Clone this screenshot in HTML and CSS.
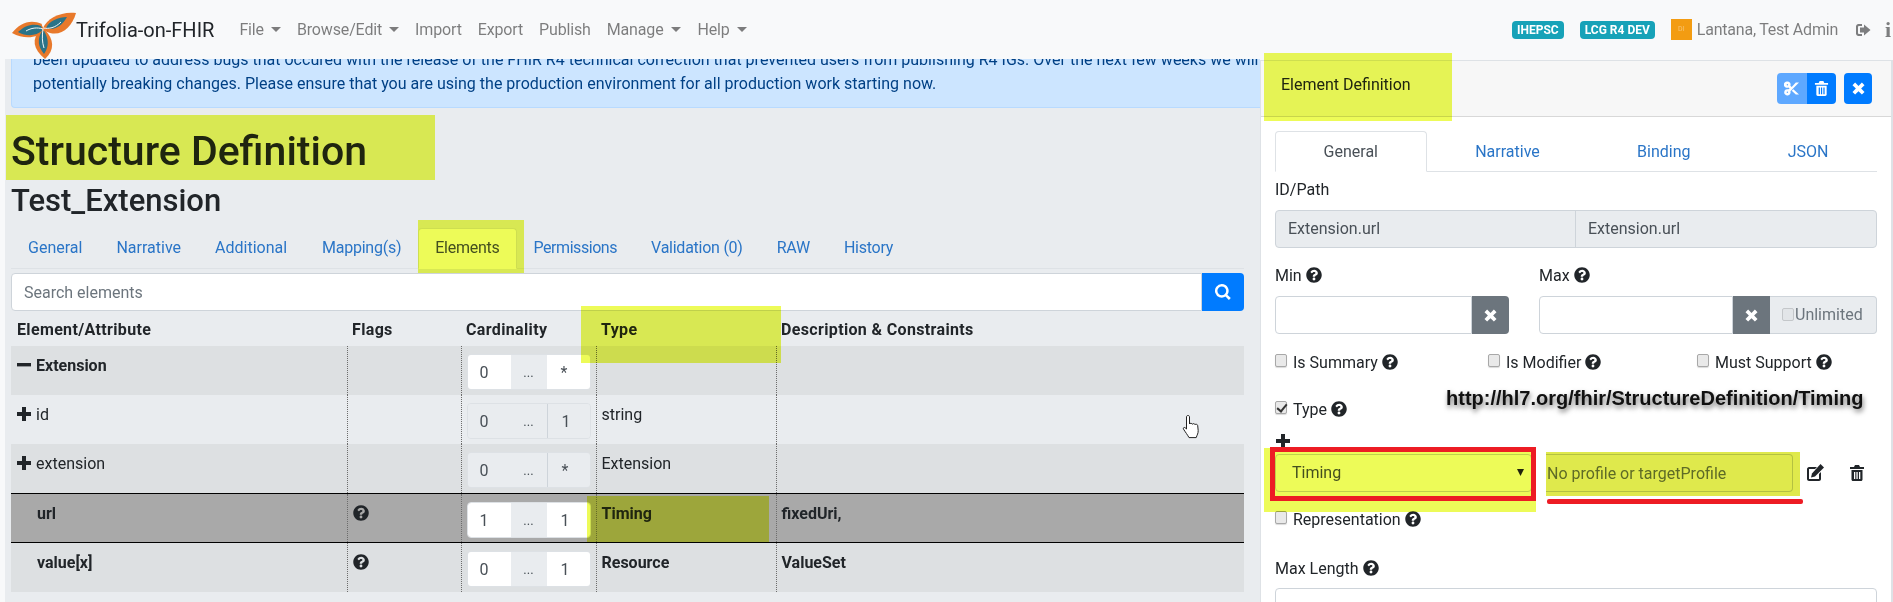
FILE: index.html
```html
<!DOCTYPE html>
<html lang="en">
<head>
<meta charset="utf-8">
<title>Trifolia-on-FHIR</title>
<link rel="stylesheet" href="styles.css">
</head>
<body>
<svg class="defs" width="0" height="0" aria-hidden="true">
  <symbol id="help" viewBox="0 0 512 512"><path fill-rule="evenodd" d="M504 256c0 136.997-111.043 248-248 248S8 392.997 8 256C8 119.083 119.043 8 256 8s248 111.083 248 248zM262.655 90c-54.497 0-89.255 22.957-116.549 63.758-3.536 5.286-2.353 12.415 2.715 16.258l34.699 26.31c5.205 3.947 12.621 3.008 16.665-2.122 17.864-22.658 30.113-35.797 57.303-35.797 20.429 0 45.698 13.148 45.698 32.958 0 14.976-12.363 22.667-32.534 33.976C247.128 238.528 216 254.941 216 296v4c0 6.627 5.373 12 12 12h56c6.627 0 12-5.373 12-12v-1.333c0-28.462 83.186-29.647 83.186-106.667 0-58.002-60.165-102-116.531-102zM256 338c-25.365 0-46 20.635-46 46 0 25.364 20.635 46 46 46s46-20.636 46-46c0-25.365-20.635-46-46-46z"/></symbol>
  <symbol id="plus" viewBox="0 0 16 16"><path d="M6 1h4v5h5v4h-5v5H6v-5H1V6h5z"/></symbol>
  <symbol id="minus" viewBox="0 0 16 16"><path d="M1 6h14v3.400H1z"/></symbol>
  <symbol id="times" viewBox="0 0 16 16"><path d="M4.400 1.600 8 5.200l3.600-3.600 2.800 2.800L10.800 8l3.600 3.600-2.800 2.800L8 10.800l-3.600 3.600-2.800-2.800L5.200 8 1.600 4.400z"/></symbol>
  <symbol id="trash" viewBox="0 0 14 16"><path fill-rule="evenodd" d="M5 0h4l1 2h4v2H0V2h4zM1.500 5h11v9.500c0 .9-.6 1.500-1.500 1.500H3c-.9 0-1.500-.6-1.500-1.500zM4 7v7h1.300V7zm2.400 0v7h1.300V7zM9 7v7h1.300V7z"/></symbol>
  <symbol id="scissors" viewBox="0 0 16 16"><path fill-rule="evenodd" d="M3.600 0.500a3.400 3.400 0 0 1 3.200 4.600L8.200 6.400 12.600 1.500H16L6.800 10.900a3.400 3.400 0 1 1-2-2L6 8 4.800 6.900A3.400 3.400 0 1 1 3.600.5zm0 2.600a.8.8 0 1 0 0 1.600.8.8 0 0 0 0-1.600zm0 8.200a.8.8 0 1 0 0 1.600.8.8 0 0 0 0-1.600zM10 8.800l6 5.700h-3.400l-4.400-4z"/></symbol>
  <symbol id="edit" viewBox="0 0 18 18"><path fill-rule="evenodd" d="M3 3h8l-2 2H3v10h10v-5l2-2v7c0 1-1 2-2 2H3c-1 0-2-1-2-2V5c0-1 1-2 2-2z"/><path d="M14.500 0 18 3.500 9 12.500l-4 1 1-4z"/></symbol>
  <symbol id="signout" viewBox="0 0 16 16"><path fill-rule="evenodd" d="M3 2h4v2H4a1 1 0 0 0-1 1v6a1 1 0 0 0 1 1h3v2H3a3 3 0 0 1-2-2V4a3 3 0 0 1 2-2z"/><path d="M9 2.500 15.500 8 9 13.500V10.500H5v-5h4z"/></symbol>
  <symbol id="search" viewBox="0 0 16 16"><path fill-rule="evenodd" d="M6.800 0a6.800 6.800 0 0 1 5.500 10.800l3.500 3.300-1.900 1.900-3.400-3.500A6.800 6.800 0 1 1 6.800 0zm0 2.400a4.400 4.400 0 1 0 0 8.800 4.400 4.400 0 0 0 0-8.800z"/></symbol>
</svg>

<div class="page">
  <nav class="navbar">
    <a class="brand">
      <svg class="logo" viewBox="0 0 64 46">
        <path fill="#e8792b" d="M0 20C8 10 18 6 30 11c-1 0 1 4 3 6-7 8-20 10-33 3z"/>
        <path fill="#e8792b" d="M64 0C60 14 50 23 38 20c-4-1-6-3-7-5C35 5 50-2 64 0z"/>
        <path fill="#e8792b" d="M33 46C21 36 19 26 29 16l4 1c9 9 10 20 0 29z"/>
        <path fill="#2a7388" d="M6 19c7-7 16-9 23-6 1 2 1 3 2 4-7 6-16 7-25 2z"/>
        <path fill="#2a7388" d="M55 4C50 13 42 18 34 15c3-7 12-11 21-11z"/>
        <path fill="#2a7388" d="M32 41c-6-7-7-15-2-23h2c5 8 5 16 0 23z"/>
        <path fill="none" stroke="#f3f7f8" stroke-width="1" d="M31 15c6 1 12 0 18-6M31 16c-6-2-12-1-17 2M31 16c-1 7-1 13 1 19"/>
      </svg>
      <span>Trifolia-on-FHIR</span>
    </a>
    <ul class="menu">
      <li class="caret">File</li>
      <li class="caret">Browse/Edit</li>
      <li>Import</li>
      <li>Export</li>
      <li>Publish</li>
      <li class="caret">Manage</li>
      <li class="caret">Help</li>
    </ul>
    <div class="nav-right">
      <span class="badge">IHEPSC</span>
      <span class="badge">LCG R4 DEV</span>
      <span class="avatar">DI</span>
      <span class="user">Lantana, Test Admin</span>
      <svg class="i-signout"><use href="#signout"/></svg>
      <span class="info">i</span>
    </div>
  </nav>

  <main class="layout">
    <section class="left">
      <div class="alert">
        <p>been updated to address bugs that occured with the release of the FHIR R4 technical correction that prevented users from publishing R4 IGs. Over the next few weeks we will release</p>
        <p>potentially breaking changes. Please ensure that you are using the production environment for all production work starting now.</p>
      </div>
      <h1 class="title">Structure Definition</h1>
      <h2 class="subtitle">Test_Extension</h2>
      <ul class="tabs">
        <li>General</li>
        <li>Narrative</li>
        <li>Additional</li>
        <li>Mapping(s)</li>
        <li class="active">Elements</li>
        <li>Permissions</li>
        <li>Validation (0)</li>
        <li>RAW</li>
        <li>History</li>
      </ul>
      <div class="search">
        <input class="search-input" type="text" placeholder="Search elements">
        <button class="search-btn" type="button"><svg class="i-search"><use href="#search"/></svg></button>
      </div>
      <table class="elements">
        <colgroup><col class="c1"><col class="c2"><col class="c3"><col class="c4"><col class="c5"></colgroup>
        <thead>
          <tr><th>Element/Attribute</th><th>Flags</th><th>Cardinality</th><th>Type</th><th>Description &amp; Constraints</th></tr>
        </thead>
        <tbody>
          <tr class="stripe">
            <td class="name strong"><svg class="i-tree"><use href="#minus"/></svg>Extension</td><td></td>
            <td><div class="card"><span class="val">0</span><span class="dots">...</span><span class="val">*</span></div></td>
            <td></td><td></td>
          </tr>
          <tr>
            <td class="name"><svg class="i-tree"><use href="#plus"/></svg>id</td><td></td>
            <td><div class="card off"><span class="val">0</span><span class="dots">...</span><span class="val">1</span></div></td>
            <td>string</td><td></td>
          </tr>
          <tr class="stripe">
            <td class="name"><svg class="i-tree"><use href="#plus"/></svg>extension</td><td></td>
            <td><div class="card off"><span class="val">0</span><span class="dots">...</span><span class="val">*</span></div></td>
            <td>Extension</td><td></td>
          </tr>
          <tr class="selected">
            <td class="name strong indent">url</td><td><svg class="i-help"><use href="#help"/></svg></td>
            <td><div class="card"><span class="val">1</span><span class="dots">...</span><span class="val">1</span></div></td>
            <td class="strong">Timing</td><td class="strong">fixedUri,</td>
          </tr>
          <tr class="stripe">
            <td class="name strong indent">value[x]</td><td><svg class="i-help"><use href="#help"/></svg></td>
            <td><div class="card"><span class="val">0</span><span class="dots">...</span><span class="val">1</span></div></td>
            <td class="strong">Resource</td><td class="strong">ValueSet</td>
          </tr>
        </tbody>
      </table>
    </section>

    <aside class="panel">
      <header class="panel-head">
        <span class="panel-title">Element Definition</span>
        <div class="panel-actions">
          <div class="btn-group">
            <button class="btn light" type="button"><svg class="i-btn"><use href="#scissors"/></svg></button>
            <button class="btn" type="button"><svg class="i-btn"><use href="#trash"/></svg></button>
          </div>
          <button class="btn solo" type="button"><svg class="i-btn"><use href="#times"/></svg></button>
        </div>
      </header>
      <div class="panel-body">
        <ul class="ptabs">
          <li class="active">General</li>
          <li>Narrative</li>
          <li>Binding</li>
          <li>JSON</li>
        </ul>
        <label class="lbl lbl-id">ID/Path</label>
        <div class="readonly"><span>Extension.url</span><span>Extension.url</span></div>

        <div class="minmax">
          <div>
            <label class="lbl">Min <svg class="i-help"><use href="#help"/></svg></label>
            <div class="igroup">
              <input class="num" type="text">
              <button class="clear" type="button"><svg class="i-x"><use href="#times"/></svg></button>
            </div>
          </div>
          <div>
            <label class="lbl">Max <svg class="i-help"><use href="#help"/></svg></label>
            <div class="igroup">
              <input class="num" type="text">
              <button class="clear" type="button"><svg class="i-x"><use href="#times"/></svg></button>
              <span class="unlimited"><input class="cb" type="checkbox" disabled>Unlimited</span>
            </div>
          </div>
        </div>

        <div class="checks">
          <label><input class="cb" type="checkbox">Is Summary <svg class="i-help"><use href="#help"/></svg></label>
          <label><input class="cb" type="checkbox">Is Modifier <svg class="i-help"><use href="#help"/></svg></label>
          <label><input class="cb" type="checkbox">Must Support <svg class="i-help"><use href="#help"/></svg></label>
        </div>

        <label class="check-line type-line"><input class="cb" type="checkbox" checked>Type <svg class="i-help"><use href="#help"/></svg></label>
        <svg class="i-add"><use href="#plus"/></svg>
        <div class="type-row">
          <select class="type-select"><option>Timing</option></select>
          <input class="profile" type="text" placeholder="No profile or targetProfile">
          <svg class="i-edit"><use href="#edit"/></svg>
          <svg class="i-trash"><use href="#trash"/></svg>
        </div>
        <label class="check-line repr-line"><input class="cb" type="checkbox">Representation <svg class="i-help"><use href="#help"/></svg></label>
        <label class="lbl lbl-len">Max Length <svg class="i-help"><use href="#help"/></svg></label>
        <input class="len" type="text">
      </div>
    </aside>
  </main>

  <div class="hl hl-title"></div>
  <div class="hl hl-tab"></div>
  <div class="hl hl-type"></div>
  <div class="hl hl-timing"></div>
  <div class="hl hl-def"></div>
  <div class="hl hl-select"></div>
  <div class="hl hl-profile"></div>
  <div class="redbox"></div>
  <div class="redline"></div>
  <div class="url-note">http://hl7.org/fhir/StructureDefinition/Timing</div>
  <svg class="cursor" viewBox="0 0 20 25"><path fill="#fff" stroke="#222" stroke-width="1" d="M6 1.500c1 0 1.500.6 1.500 1.500v7c.3-1 2.600-1 2.800.3.400-1 2.500-.9 2.700.4.500-.8 2.500-.6 2.700.9l.5 5c0 3-1 4-2 7H7c-1-2-4-6-5.500-8.500-.6-1.200.6-2.200 1.700-1.300L4.500 15V3c0-.9.500-1.500 1.500-1.500z"/></svg>
</div>
</body>
</html>
```
FILE: styles.css
```css
* { box-sizing: border-box; }
html, body { margin: 0; padding: 0; }
body {
  width: 1893px;
  height: 602px;
  overflow: hidden;
  background: #f8f9fa;
  color: #212529;
  font-family: Roboto, "Liberation Sans", sans-serif;
  font-size: 16px;
  line-height: 24px;
}
.defs { position: absolute; }
ul { list-style: none; margin: 0; padding: 0; }
p { margin: 0; }
button { border: 0; padding: 0; margin: 0; }
svg { fill: currentColor; }

.page { position: relative; width: 1893px; height: 602px; overflow: hidden; }

/* navbar */
.navbar {
  position: relative;
  z-index: 2;
  height: 59px;
  background: #f8f9fa;
  display: flex;
  align-items: center;
  padding: 0 0 0 12px;
}
.brand { display: flex; align-items: center; color: #212529; font-size: 20px; height: 59px; }
.logo { width: 64px; height: 46px; margin-top: 13px; align-self: flex-start; flex: none; overflow: visible; }
.menu { display: flex; margin-left: 25px; color: rgba(0,0,0,.5); letter-spacing: -.15px; }
.menu li { margin-right: 16px; }
.menu li.caret::after {
  content: "";
  display: inline-block;
  margin-left: 7px;
  vertical-align: 3px;
  border-top: 5px solid rgba(0,0,0,.5);
  border-left: 5px solid transparent;
  border-right: 5px solid transparent;
}
.menu li:nth-child(6) { margin-right: 17px; }
.nav-right { margin-left: auto; display: flex; align-items: center; color: rgba(0,0,0,.5); }
.badge {
  background: #17a2b8;
  color: #fff;
  font-size: 12px;
  font-weight: 700;
  line-height: 18px;
  height: 18px;
  border-radius: 4px;
  padding: 0 5px;
  margin-right: 16px;
}
.avatar {
  width: 21px;
  height: 21px;
  background: #f39c12;
  color: #f8c471;
  font-size: 7px;
  line-height: 21px;
  text-align: center;
  margin-right: 5px;
}
.user { letter-spacing: -.22px; }
.i-signout { width: 16px; height: 16px; margin-left: 17px; color: #7d7e7f; }
.info { font-family: "Liberation Serif", serif; font-weight: 700; font-size: 22px; margin-left: 14px; width: 8px; color: #7d7e7f; }

/* layout */
.layout { display: grid; grid-template-columns: 1260px 633px; height: 543px; }
.left {
  margin-left: 5px;
  padding: 0 16px 0 6px;
  background: #e9ecef;
  min-width: 0;
}
.alert {
  margin-top: -24px;
  height: 73px;
  padding: 12px 21px;
  background: #cce5ff;
  border: 1px solid #b8daff;
  border-right: 0;
  border-radius: 4px 0 0 4px;
  margin-right: -16px;
  color: #004085;
  overflow: hidden;
  white-space: nowrap;
  letter-spacing: .01px;
}
.title { margin: 19px 0 7px; font-size: 41px; line-height: 48px; font-weight: 500; color: #212529; }
.subtitle { margin: 0 0 8px; font-size: 31px; line-height: 38px; font-weight: 500; color: #212529; }

.tabs { display: flex; border-bottom: 1px solid #dee2e6; height: 41px; margin-bottom: 4px; }
.tabs li { padding: 8px 17px; color: #2a75c7; height: 41px; }
.tabs li:nth-child(n+4) { letter-spacing: -.25px; }
.tabs li:nth-child(4) { padding-left: 18px; }
.tabs li:nth-child(6) { letter-spacing: -.45px; }
.tabs li.active { background: #fff; color: #495057; border: 1px solid #dee2e6; border-bottom-color: #fff; border-radius: 4px 4px 0 0; padding: 7px 16px; }

.search { display: flex; height: 38px; }
.search-input {
  flex: 1;
  min-width: 0;
  border: 1px solid #ced4da;
  border-radius: 4px 0 0 4px;
  padding: 2px 12px 0;
  font: inherit;
  background: #fff;
}
.search-input::placeholder, .profile::placeholder { color: #6c757d; opacity: 1; }
.search-btn { width: 42px; background: #007bff; color: #fff; border-radius: 0 4px 4px 0; display: flex; align-items: center; justify-content: center; }
.i-search { width: 16px; height: 16px; }

.elements { width: 1233px; border-collapse: collapse; table-layout: fixed; }
.c1 { width: 336px; } .c2 { width: 114px; } .c3 { width: 135px; } .c4 { width: 180px; } .c5 { width: 468px; }
.elements th { text-align: left; font-weight: 700; padding: 7px 5px 4px; height: 35px; letter-spacing: .35px; }
.elements th:first-child { padding-left: 6px; }
.elements td { vertical-align: top; padding: 8px 5px 0; height: 49.2px; border-left: 1px dotted #6c6c6c; }
.elements td:first-child { border-left: 0; }
.stripe { background: rgba(0,0,0,.05); }
.selected { background: #a9a9a9; border-top: 1.500px solid #000; border-bottom: 1.500px solid #000; }
.strong { font-weight: 700; }
.name { white-space: nowrap; }
.indent { padding-left: 26px !important; }
.i-tree { width: 16px; height: 16px; vertical-align: -2px; margin-right: 4px; color: #212529; }
.i-help { width: 16px; height: 16px; vertical-align: -2px; color: #212529; }

.card {
  display: grid;
  grid-template-columns: 43px 36px 43px;
  height: 36px;
  width: 124px;
  border-radius: 4px;
  overflow: hidden;
  line-height: 36px;
  color: #495057;
  border: 1px solid #dde1e5;
}
.val { background: #fff; padding-left: 12px; }
.val:last-child { padding-left: 14px; }
.dots { background: #e9ecef; font-size: 13px; text-align: center; }
.card.off .val { background: #e9ecef; }
.card.off .val + .dots + .val { border-left: 1px solid #ced4da; }

/* panel */
.panel {
  margin-top: 1px;
  background: #fff;
  border-left: 1px solid #dee2e6;
  border-top: 1px solid #dee2e6;
  border-right: 2px solid #dee2e6;
  min-width: 0;
}
.panel-head {
  height: 56px;
  background: #f7f7f7;
  border-bottom: 1px solid #d8d8d8;
  display: flex;
  align-items: center;
  justify-content: space-between;
  padding: 0 19px 0 20px;
}
.panel-title { margin-bottom: 7px; }
.panel-actions { display: flex; gap: 8px; }
.btn-group { display: flex; }
.btn { width: 29.500px; height: 31px; background: #007bff; color: #fff; display: flex; align-items: center; justify-content: center; border-radius: 0 4px 4px 0; }
.btn.light { background: #5ea8ff; border-radius: 4px 0 0 4px; }
.btn.solo { width: 28px; border-radius: 4px; }
.i-btn { width: 15px; height: 15px; }

.panel-body { padding: 14px 14px 0; }
.ptabs { display: flex; border-bottom: 1px solid #dee2e6; height: 41px; }
.ptabs li { flex: 1 1 auto; text-align: center; padding: 9px 48px 7px; height: 41px; color: #2a75c7; }
.ptabs li.active { color: #495057; background: #fff; border: 1px solid #dee2e6; border-bottom-color: #fff; border-radius: 4px 4px 0 0; padding: 8px 47px 7px; }

.lbl { display: block; height: 24px; margin-bottom: 8px; }
.lbl-id { margin-top: 6px; margin-bottom: 8px; }
.readonly {
  display: grid;
  grid-template-columns: 299px 1fr;
  height: 38px;
  background: #e9ecef;
  border: 1px solid #ced4da;
  border-radius: 4px;
  color: #495057;
  line-height: 36px;
}
.readonly span { padding-left: 12px; }
.readonly span + span { border-left: 1px solid #ced4da; }

.minmax { display: grid; grid-template-columns: 234px 338px; column-gap: 30px; margin-top: 16px; }
.igroup { display: flex; height: 38px; }
.num { flex: 1; min-width: 0; border: 1px solid #ced4da; border-radius: 4px 0 0 4px; background: #fff; font: inherit; }
.clear { width: 37px; background: #6c757d; color: #fff; display: flex; align-items: center; justify-content: center; }
.minmax > div:first-child .clear { border-radius: 0 4px 4px 0; }
.i-x { width: 15px; height: 15px; }
.unlimited { width: 107px; background: #e9ecef; border: 1px solid #ced4da; border-left: 0; border-radius: 0 4px 4px 0; line-height: 36px; color: #6c757d; white-space: nowrap; padding-left: 12px; }

.cb {
  appearance: none;
  -webkit-appearance: none;
  display: inline-block;
  position: relative;
  width: 12px;
  height: 13px;
  margin: 0 6px 0 0;
  vertical-align: 1px;
  background: #e9e9e9;
  border: 1px solid #a8a8a8;
  border-radius: 2px;
  box-shadow: 0 1px 1px rgba(0,0,0,.15);
}
.cb:checked::after {
  content: "";
  position: absolute;
  left: 3px;
  top: 0;
  width: 4px;
  height: 8px;
  border-right: 2px solid #333;
  border-bottom: 2px solid #333;
  transform: rotate(40deg);
}
.unlimited .cb { margin-right: 1px; vertical-align: -1px; background: #e2e5e8; border-color: #c4c7ca; box-shadow: none; }

.checks { display: grid; grid-template-columns: 213px 209px 1fr; margin-top: 17px; height: 24px; }
.checks label, .check-line { display: block; white-space: nowrap; }
.type-line { margin-top: 23px; }
.i-add { display: block; width: 16px; height: 16px; margin-top: 11px; color: #212529; }
.type-row { display: flex; align-items: center; margin-top: 5px; height: 38px; }
.type-select {
  appearance: none;
  -webkit-appearance: none;
  width: 257px;
  height: 38px;
  padding: 0 16px;
  border: 1px solid #ced4da;
  border-radius: 4px;
  background: #fff url("data:image/svg+xml,%3Csvg xmlns='http://www.w3.org/2000/svg' width='8' height='8'%3E%3Cpath d='M0 1h7L3.500 8z' fill='%23222'/%3E%3C/svg%3E") no-repeat right 6px top 13px;
  font: inherit;
  color: #495057;
}
.profile { width: 247px; height: 38px; margin-left: 14px; padding: 0 0 0 1px; border: 1px solid #ced4da; border-left: 0; border-radius: 0 4px 4px 0; font: inherit; }
.i-edit { width: 18px; height: 18px; margin-left: 13px; flex: none; color: #212529; }
.i-trash { width: 14px; height: 18px; margin-left: 26px; flex: none; color: #212529; }
.repr-line { margin-top: 16px; }
.lbl-len { margin-top: 25px; margin-bottom: 7px; }
.len { display: block; width: 602px; height: 38px; border: 1px solid #ced4da; border-radius: 4px; background: #fff; }

/* markup drawn over the screenshot */
.hl { position: absolute; z-index: 3; mix-blend-mode: multiply; background: #edfb58; }
.hl-title { left: 6px; top: 115px; width: 429px; height: 65px; }
.hl-tab { left: 418px; top: 220px; width: 106px; height: 53px; }
.hl-type { left: 581px; top: 306px; width: 200px; height: 57px; }
.hl-timing { left: 587px; top: 496px; width: 182px; height: 46px; }
.hl-def { left: 1264px; top: 53px; width: 188px; height: 68px; }
.hl-select { left: 1264px; top: 448px; width: 272px; height: 64px; }
.hl-profile { left: 1546px; top: 452px; width: 254px; height: 44px; background: #dfe94c; }
.redbox { position: absolute; z-index: 4; left: 1270px; top: 447px; width: 266px; height: 54px; border: 5px solid #ed1c24; }
.redline { position: absolute; z-index: 4; left: 1547px; top: 499px; width: 256px; height: 5px; background: #ed1c24; border-radius: 2px; }
.url-note {
  position: absolute;
  z-index: 4;
  left: 1446px;
  top: 384px;
  font-family: "Liberation Sans", Arial, sans-serif;
  font-weight: 700;
  font-size: 20px;
  line-height: 28px;
  white-space: nowrap;
  color: #111;
  text-shadow: 1px 3px 5px rgba(0,0,0,.55);
}
.cursor { position: absolute; z-index: 4; left: 1182px; top: 414px; width: 20px; height: 25px; }
```
